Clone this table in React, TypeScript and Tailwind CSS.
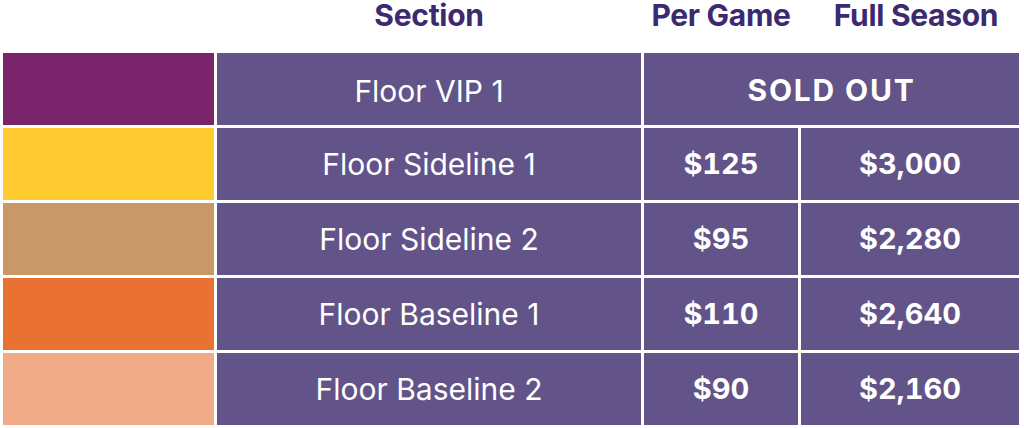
import React from "react";

type Row = {
    swatch: string;
    section: string;
    perGame?: string;
    fullSeason?: string;
};

const rows: Row[] = [
    { swatch: "bg-[#7a256b]", section: "Floor VIP 1" },
    { swatch: "bg-[#ffcb30]", section: "Floor Sideline 1", perGame: "$125", fullSeason: "$3,000" },
    { swatch: "bg-[#c99868]", section: "Floor Sideline 2", perGame: "$95", fullSeason: "$2,280" },
    { swatch: "bg-[#e97233]", section: "Floor Baseline 1", perGame: "$110", fullSeason: "$2,640" },
    { swatch: "bg-[#f1ab88]", section: "Floor Baseline 2", perGame: "$90", fullSeason: "$2,160" },
];

const cell = "bg-[#625389] text-white flex items-center justify-center";

export default function App() {
    return (
        <div className="w-[1024px] h-[428px] bg-white overflow-hidden" style={{ fontFamily: "Inter, 'Noto Sans', sans-serif" }}>
            {/* Header */}
            <div className="ml-[3px] grid grid-cols-[211px_424px_154px_218px] gap-x-[3px] h-[53px] text-[30px] leading-[30px] font-bold tracking-[-0.01em] text-[#3b2a6f]">
                <div />
                <div className="text-center">Section</div>
                <div className="text-center">Per Game</div>
                <div className="text-center pl-[12px]">Full Season</div>
            </div>

            {/* Table */}
            <div className="ml-[3px] grid grid-cols-[211px_424px_154px_218px] auto-rows-[72px] gap-[3px]">
                {rows.map((r, i) => (
                    <React.Fragment key={r.section}>
                        <div className={r.swatch} />
                        <div className={`${cell} text-[30px] ${i === 0 ? "pt-[5px]" : ""}`}>{r.section}</div>
                        {r.perGame ? (
                            <>
                                <div className={`${cell} text-[29px] font-bold tabular-nums`}>{r.perGame}</div>
                                <div className={`${cell} text-[29px] font-bold tabular-nums`}>{r.fullSeason}</div>
                            </>
                        ) : (
                            <div className={`${cell} col-span-2 text-[30px] font-bold tracking-[0.06em] pt-[3px]`}>SOLD OUT</div>
                        )}
                    </React.Fragment>
                ))}
            </div>
        </div>
    );
}
